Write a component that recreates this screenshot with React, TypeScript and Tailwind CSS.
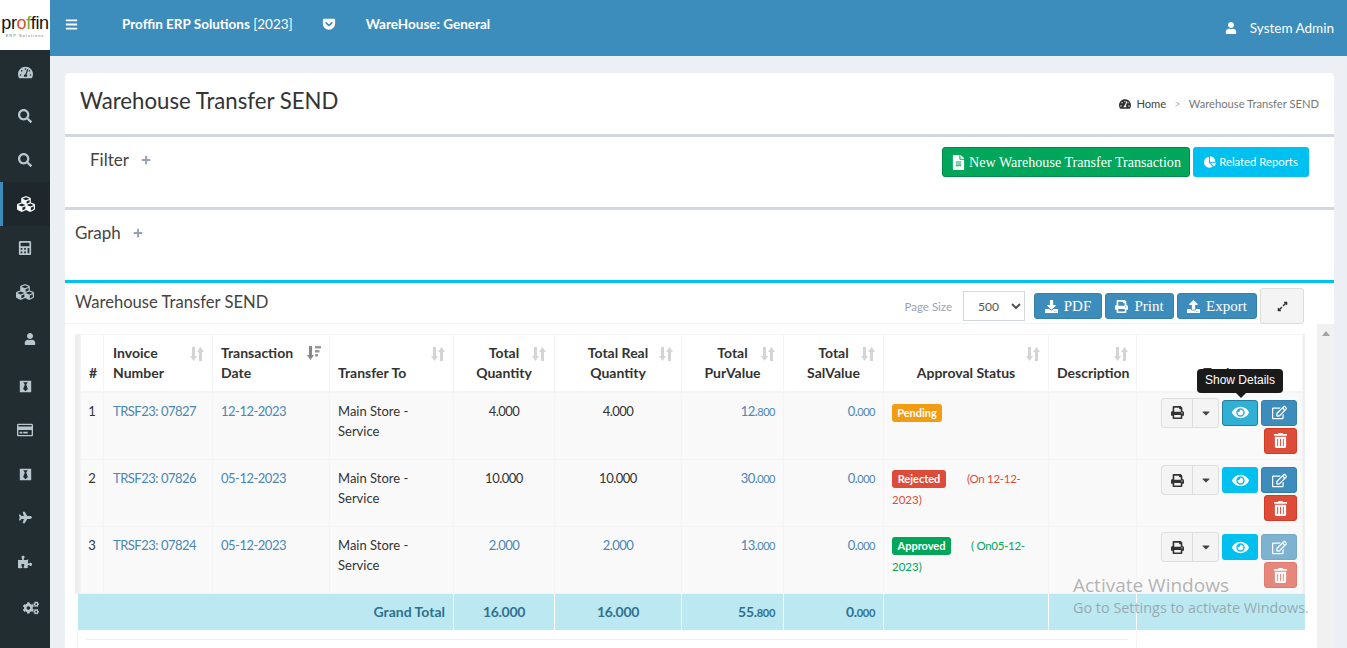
import React from "react";
import {
  FaTachometerAlt, FaSearch, FaCubes, FaCalculator, FaUser, FaBlackTie, FaRegCreditCard, FaPlane,
  FaPuzzlePiece, FaCogs, FaGetPocket, FaFileAlt, FaChartPie, FaDownload, FaPrint, FaUpload,
  FaExpandAlt, FaEye, FaRegEdit, FaTrashAlt, FaBars, FaPlus, FaCaretDown,
} from "react-icons/fa";

const nav = [
  { I: FaTachometerAlt, c: "text-[15px]", m: "" },
  { I: FaSearch, c: "text-[14px]", m: "" },
  { I: FaSearch, c: "text-[14px]", m: "" },
  { I: FaCubes, c: "text-[18px] text-white", m: "", active: true },
  { I: FaCalculator, c: "text-[14px]", m: "" },
  { I: FaCubes, c: "text-[18px]", m: "" },
  { I: FaUser, c: "text-[12px] ml-[10px]", m: "mt-[3px]" },
  { I: FaBlackTie, c: "text-[13px]", m: "mt-[3px]" },
  { I: FaRegCreditCard, c: "text-[16px]", m: "" },
  { I: FaBlackTie, c: "text-[13px]", m: "" },
  { I: FaPlane, c: "text-[13px]", m: "-mt-[1px]" },
  { I: FaPuzzlePiece, c: "text-[14px]", m: "mt-[1px]" },
  { I: FaCogs, c: "text-[16px] ml-[12px]", m: "mt-[2px]" },
];

function Sort({ active }: { active?: boolean }) {
  if (active) {
    return (
      <svg viewBox="0 0 14 14" className="absolute right-[8px] top-[11px] w-[14px] h-[14px]">
        <path d="M2 0h3v9h2L3.500 14 0 9h2z" fill="#888" />
        <path d="M8 0h6v2.500H8zM8 4h4.500v2.500H8zM8 8h3v2.500H8z" fill="#999" />
      </svg>
    );
  }
  return (
    <svg viewBox="0 0 14 14" className="absolute right-[8px] top-[12px] w-[14px] h-[14px]">
      <path d="M2 0h3v9h2L3.500 14 0 9h2z" fill="#d4d4d4" />
      <path d="M9 14h3V5h2L10.500 0 7 5h2z" fill="#d4d4d4" />
    </svg>
  );
}

const heads: { t: React.ReactNode; a?: string; active?: boolean; noSort?: boolean }[] = [
  { t: "#", noSort: true },
  { t: <>Invoice<br />Number</> },
  { t: <>Transaction<br />Date</>, active: true },
  { t: "Transfer To" },
  { t: <>Total<br />Quantity</>, a: "text-center" },
  { t: <>Total Real<br />Quantity</>, a: "text-center" },
  { t: <>Total<br />PurValue</>, a: "text-center" },
  { t: <>Total<br />SalValue</>, a: "text-center" },
  { t: "Approval Status", a: "text-center" },
  { t: "Description" },
  { t: "Tools", a: "text-center", noSort: true },
];

const cols = ["w-[23px]", "w-[109px]", "w-[117px]", "w-[124px]", "w-[101px]", "w-[127px]", "w-[102px]", "w-[100px]", "w-[165px]", "w-[88px]", "w-[166px]"];
const link = "text-[#4a86b4]";
const tight = "tracking-[-0.5px]";

function Num({ a, b }: { a: string; b: string }) {
  return <>{a}<span className="text-[11px]">{b}</span></>;
}

function Btn({ className, children }: { className: string; children: React.ReactNode }) {
  return <button className={`flex items-center justify-center rounded-[3px] text-white text-[15px] ${className}`}>{children}</button>;
}

function Tools({ hover, faded }: { hover?: boolean; faded?: boolean }) {
  return (
    <div className="flex flex-wrap justify-end w-[136px] ml-auto mr-[1px] -mt-[1px]">
      <div className="flex items-stretch h-[30px] rounded-[3px] border border-[#ddd] bg-[#f4f4f4] text-[#333] -mt-[2px]">
        <span className="w-[31px] flex items-center justify-center text-[13px] border-r border-[#ddd]"><FaPrint /></span>
        <span className="w-[25px] flex items-center justify-center text-[12px] text-[#444]"><FaCaretDown /></span>
      </div>
      <Btn className={`ml-[3px] w-[36px] h-[26px] text-[17px] ${hover ? "bg-[#31b0d5] border border-[#1f7f9c]" : "bg-[#00c0ef]"}`}><FaEye /></Btn>
      <Btn className={`ml-[3px] w-[36px] h-[26px] bg-[#3c8dbc] border border-[#367fa9] ${faded ? "opacity-65" : ""}`}><FaRegEdit /></Btn>
      <Btn className={`w-[33px] h-[26px] bg-[#dd4b39] border border-[#d73925] text-[13px] ${faded ? "opacity-65" : ""}`}><FaTrashAlt /></Btn>
    </div>
  );
}

const rows = [
  {
    n: "1", inv: "TRSF23: 07827", date: "12-12-2023", q: "4.000", r: "4.000", qLink: false, p: ["12.", "800"], s: ["0.", "000"], h: "h-[68px]",
    status: <span className="inline-block w-[50px] h-[18px] leading-[18px] text-center rounded-[3px] bg-[#f39c12] text-white text-[11px] font-bold mt-[3px]">Pending</span>,
    hover: true,
  },
  {
    n: "2", inv: "TRSF23: 07826", date: "05-12-2023", q: "10.000", r: "10.000", qLink: false, p: ["30.", "000"], s: ["0.", "000"], h: "h-[67px]",
    status: (
      <span className="text-[11.500px] text-[#dd4b39]">
        <span className="inline-block w-[54px] h-[18px] leading-[18px] text-center rounded-[3px] bg-[#dd4b39] text-white text-[11px] font-bold mr-[21px]">Rejected</span>
        <span className="tracking-[-0.3px]">(On 12-12-</span><br />2023)
      </span>
    ),
  },
  {
    n: "3", inv: "TRSF23: 07824", date: "05-12-2023", q: "2.000", r: "2.000", qLink: true, p: ["13.", "000"], s: ["0.", "000"], h: "h-[67px]",
    status: (
      <span className="text-[11.500px] text-[#00a65a]">
        <span className="inline-block w-[59px] h-[18px] leading-[18px] text-center rounded-[3px] bg-[#00a65a] text-white text-[11px] font-bold mr-[20px]">Approved</span>
        <span className="tracking-[-0.3px]">( On05-12-</span><br />2023)
      </span>
    ),
    faded: true,
  },
];

const td = "border border-[#f4f4f4] align-top pt-[8px] px-[8px] pb-0 text-[13px]";
const ft = "border-l border-white h-[36px] text-center align-middle tracking-[-0.3px]";
const serif = "[font-family:Liberation_Serif,serif]";
const arial = "[font-family:Liberation_Sans,sans-serif]";

export default function App() {
  return (
    <div className="relative flex h-[648px] w-[1347px] overflow-hidden bg-[#ecf0f5] text-[14px] leading-[20px] text-[#333] [font-family:Lato,sans-serif]">
      <aside className="flex flex-col w-[50px] shrink-0 bg-[#222d32]">
        <div className={`h-[50px] bg-white flex flex-col items-center justify-center overflow-hidden ${arial}`}>
          <div className="text-[18px] leading-[20px] tracking-[-0.3px] text-[#111] mt-[1px] whitespace-nowrap">pr<span className="text-[#d94f2b]">o</span><span className="text-[#6bab3d]">f</span>fin</div>
          <div className="text-[4px] leading-[5px] tracking-[1px] text-[#777] whitespace-nowrap">ERP Solutions</div>
        </div>
        {nav.map(({ I, c, m, active }, i) => (
          <div key={i} className={`h-[44px] shrink-0 flex items-center justify-center text-[#b8c7ce] ${m} ${active ? "bg-[#1e282c] border-l-[3px] border-[#3c8dbc] pr-[1px]" : ""}`}>
            <I className={c} />
          </div>
        ))}
      </aside>

      <div className="flex-1 flex flex-col min-w-0">
        <header className="h-[56px] shrink-0 bg-[#3c8dbc] text-white text-[13.500px] flex items-start">
          <FaBars className="text-[13px] mt-[18px] ml-[15px]" />
          <div className="ml-[44px] mt-[14px] font-bold">Proffin ERP Solutions <span className="font-normal">[2023]</span></div>
          <FaGetPocket className="text-[14px] mt-[17px] ml-[29px]" />
          <div className="ml-[30px] mt-[14px] font-bold">WareHouse: General</div>
          <div className="ml-auto mr-[13px] mt-[18px] flex items-center">
            <FaUser className="text-[12px] mr-[13px]" />
            <span>System Admin</span>
          </div>
        </header>

        <main className="flex-1 min-h-0 pt-[17px] pl-[15px] pr-[13px]">
          <div className="h-full bg-white rounded-t-[4px] flex flex-col">
            <section className="h-[61px] shrink-0 flex items-center justify-between pl-[15px] pr-[15px]">
              <h1 className="text-[22.200px] leading-[30px] text-[#333] -mt-[6px]">Warehouse Transfer SEND</h1>
              <div className="flex items-center text-[11.200px] mt-[1px]">
                <FaTachometerAlt className="text-[12px] text-[#333] mr-[5px]" />
                <span className="text-[#444]">Home</span>
                <span className="text-[#bbb] mx-[8px]">&gt;</span>
                <span className="text-[#777]">Warehouse Transfer SEND</span>
              </div>
            </section>

            <section className="h-[73px] shrink-0 border-t-[3px] border-[#d2d6de] flex items-start">
              <div className="flex items-center ml-[25px] mt-[13px] text-[17px] text-[#444]">
                Filter <FaPlus className="text-[10px] text-[#97a0b3] ml-[12px]" />
              </div>
              <div className="ml-auto mr-[25px] mt-[10px] flex gap-[3px]">
                <button className={`h-[30px] w-[248px] rounded-[3px] bg-[#00a65a] border border-[#008d4c] text-white text-[14.100px] whitespace-nowrap flex items-center justify-center gap-[3px] ${serif}`}>
                  <FaFileAlt className="text-[15px]" />New Warehouse Transfer Transaction
                </button>
                <button className="h-[30px] w-[116px] rounded-[3px] bg-[#00c0ef] text-white text-[11.300px] flex items-center justify-center gap-[3px]">
                  <FaChartPie className="text-[12px]" />Related Reports
                </button>
              </div>
            </section>

            <section className="h-[73px] shrink-0 border-t-[3px] border-[#d2d6de] flex items-start">
              <div className="flex items-center ml-[10px] mt-[13px] text-[17px] text-[#444]">
                Graph <FaPlus className="text-[10px] text-[#97a0b3] ml-[12px]" />
              </div>
            </section>

            <section className="flex-1 min-h-0 border-t-[3px] border-[#00c0ef] flex flex-col">
              <div className="h-[41px] shrink-0 border-b border-[#f4f4f4] flex items-start pl-[10px] mr-[30px]">
                <div className="text-[16.600px] leading-[24px] text-[#444] mt-[7px]">Warehouse Transfer SEND</div>
                <div className="ml-auto flex items-start">
                  <span className="text-[11.500px] text-[#9aa3b5] mt-[14px] mr-[11px]">Page Size</span>
                  <select defaultValue="500" className="w-[62px] h-[30px] mt-[8px] mr-[9px] border border-[#d2d6de] bg-white text-[12px] text-[#555] pl-[10px]">
                    <option>500</option>
                  </select>
                  <div className={`flex gap-[3px] mt-[10px] ${serif}`}>
                    <Btn className="w-[68px] h-[26px] gap-[6px] bg-[#3c8dbc] border border-[#367fa9]"><FaDownload className="text-[13px]" />PDF</Btn>
                    <Btn className="w-[69px] h-[26px] gap-[6px] bg-[#3c8dbc] border border-[#367fa9]"><FaPrint className="text-[13px]" />Print</Btn>
                    <Btn className="w-[80px] h-[26px] gap-[6px] bg-[#3c8dbc] border border-[#367fa9]"><FaUpload className="text-[13px]" />Export</Btn>
                  </div>
                  <button className="w-[44px] h-[36px] mt-[5px] ml-[3px] rounded-[3px] border border-[#ddd] bg-[#f4f4f4] flex items-center justify-center text-[#333] text-[11px]"><FaExpandAlt /></button>
                </div>
              </div>

              <div className="flex-1 min-h-0 flex">
                <div className="w-[1230px] ml-[10px] pt-[10px] overflow-hidden">
                  <div className="border-l-[5px] border-r-[3px] border-[#eeeeee]">
                    <table className="w-[1222px] table-fixed border-collapse">
                      <colgroup>{cols.map((c, i) => <col key={i} className={c} />)}</colgroup>
                      <thead>
                        <tr className="h-[57px]">
                          {heads.map((h, i) => (
                            <th key={i} className={`relative border border-[#f4f4f4] border-b-2 align-bottom pb-[8px] px-[8px] font-bold text-[#333] ${i === 1 ? "pl-[9px] text-left" : ""} ${i === 2 || i === 3 || i === 9 ? "text-left" : ""} ${i === 0 ? "text-center px-0" : ""} ${h.a ?? ""}`}>
                              {h.t}
                              {!h.noSort && <Sort active={h.active} />}
                            </th>
                          ))}
                        </tr>
                      </thead>
                      <tbody>
                        {rows.map((r) => (
                          <tr key={r.n} className={`${r.h} bg-[#f9f9f9]`}>
                            <td className={`${td} !px-0 text-center`}>{r.n}</td>
                            <td className={`${td} !pl-[9px] whitespace-nowrap ${tight} ${link}`}>{r.inv}</td>
                            <td className={`${td} ${tight} ${link}`}>{r.date}</td>
                            <td className={td}>Main Store -<br />Service</td>
                            <td className={`${td} text-center ${tight} ${r.qLink ? link : ""}`}>{r.q}</td>
                            <td className={`${td} text-center ${tight} ${r.qLink ? link : ""}`}>{r.r}</td>
                            <td className={`${td} text-right ${tight} ${link}`}><Num a={r.p[0]} b={r.p[1]} /></td>
                            <td className={`${td} text-right ${tight} ${link}`}><Num a={r.s[0]} b={r.s[1]} /></td>
                            <td className={td}>{r.status}</td>
                            <td className={td}></td>
                            <td className={`${td} !pr-[4px]`}><Tools hover={r.hover} faded={r.faded} /></td>
                          </tr>
                        ))}
                      </tbody>
                    </table>
                  </div>
                  <table className="ml-[2px] w-[1228px] table-fixed border-collapse">
                    <colgroup>
                      <col className="w-[376px]" /><col className="w-[101px]" /><col className="w-[127px]" /><col className="w-[102px]" />
                      <col className="w-[100px]" /><col className="w-[165px]" /><col className="w-[88px]" /><col className="w-[169px]" />
                    </colgroup>
                    <tbody>
                      <tr className="bg-[#bce8f1] text-[#31708f] font-bold">
                        <td className="h-[36px] text-right pr-[8px] align-middle">Grand Total</td>
                        <td className={ft}>16.000</td>
                        <td className={ft}>16.000</td>
                        <td className={`${ft} !text-right pr-[8px]`}><Num a="55." b="800" /></td>
                        <td className={`${ft} !text-right pr-[8px]`}><Num a="0." b="000" /></td>
                        <td className={ft}></td>
                        <td className={ft}></td>
                        <td className={ft}></td>
                      </tr>
                      <tr>
                        <td colSpan={7} className="h-[30px] align-top border-l border-[#f4f4f4] pt-[9px] pl-[8px] pr-[8px]">
                          <div className="border-t border-[#eeeeee]"></div>
                        </td>
                        <td className="border-x border-[#f4f4f4]"></td>
                      </tr>
                    </tbody>
                  </table>
                </div>
                <div className="ml-auto w-[17px] bg-[#f1f1f1] flex justify-center pt-[7px]">
                  <div className="w-0 h-0 border-x-[4px] border-x-transparent border-b-[5px] border-b-[#a3a3a3]"></div>
                </div>
              </div>
            </section>
          </div>
        </main>
      </div>

      <div className={`absolute left-[1197px] top-[369px] w-[86px] h-[24px] rounded-[4px] bg-[#1a1a1a] text-white text-[12px] leading-[22px] text-center ${arial}`}>
        Show Details
        <div className="absolute left-[39px] top-[24px] w-0 h-0 border-x-[5px] border-x-transparent border-t-[5px] border-t-[#1a1a1a]"></div>
      </div>

      <div className="absolute left-[1073px] top-[573px] text-[#6b6b6b]/50 [font-family:Open_Sans,sans-serif] pointer-events-none">
        <div className="text-[19px] leading-[24px]">Activate Windows</div>
        <div className="text-[14.400px] leading-[22px] whitespace-nowrap">Go to Settings to activate Windows.</div>
      </div>
    </div>
  );
}
